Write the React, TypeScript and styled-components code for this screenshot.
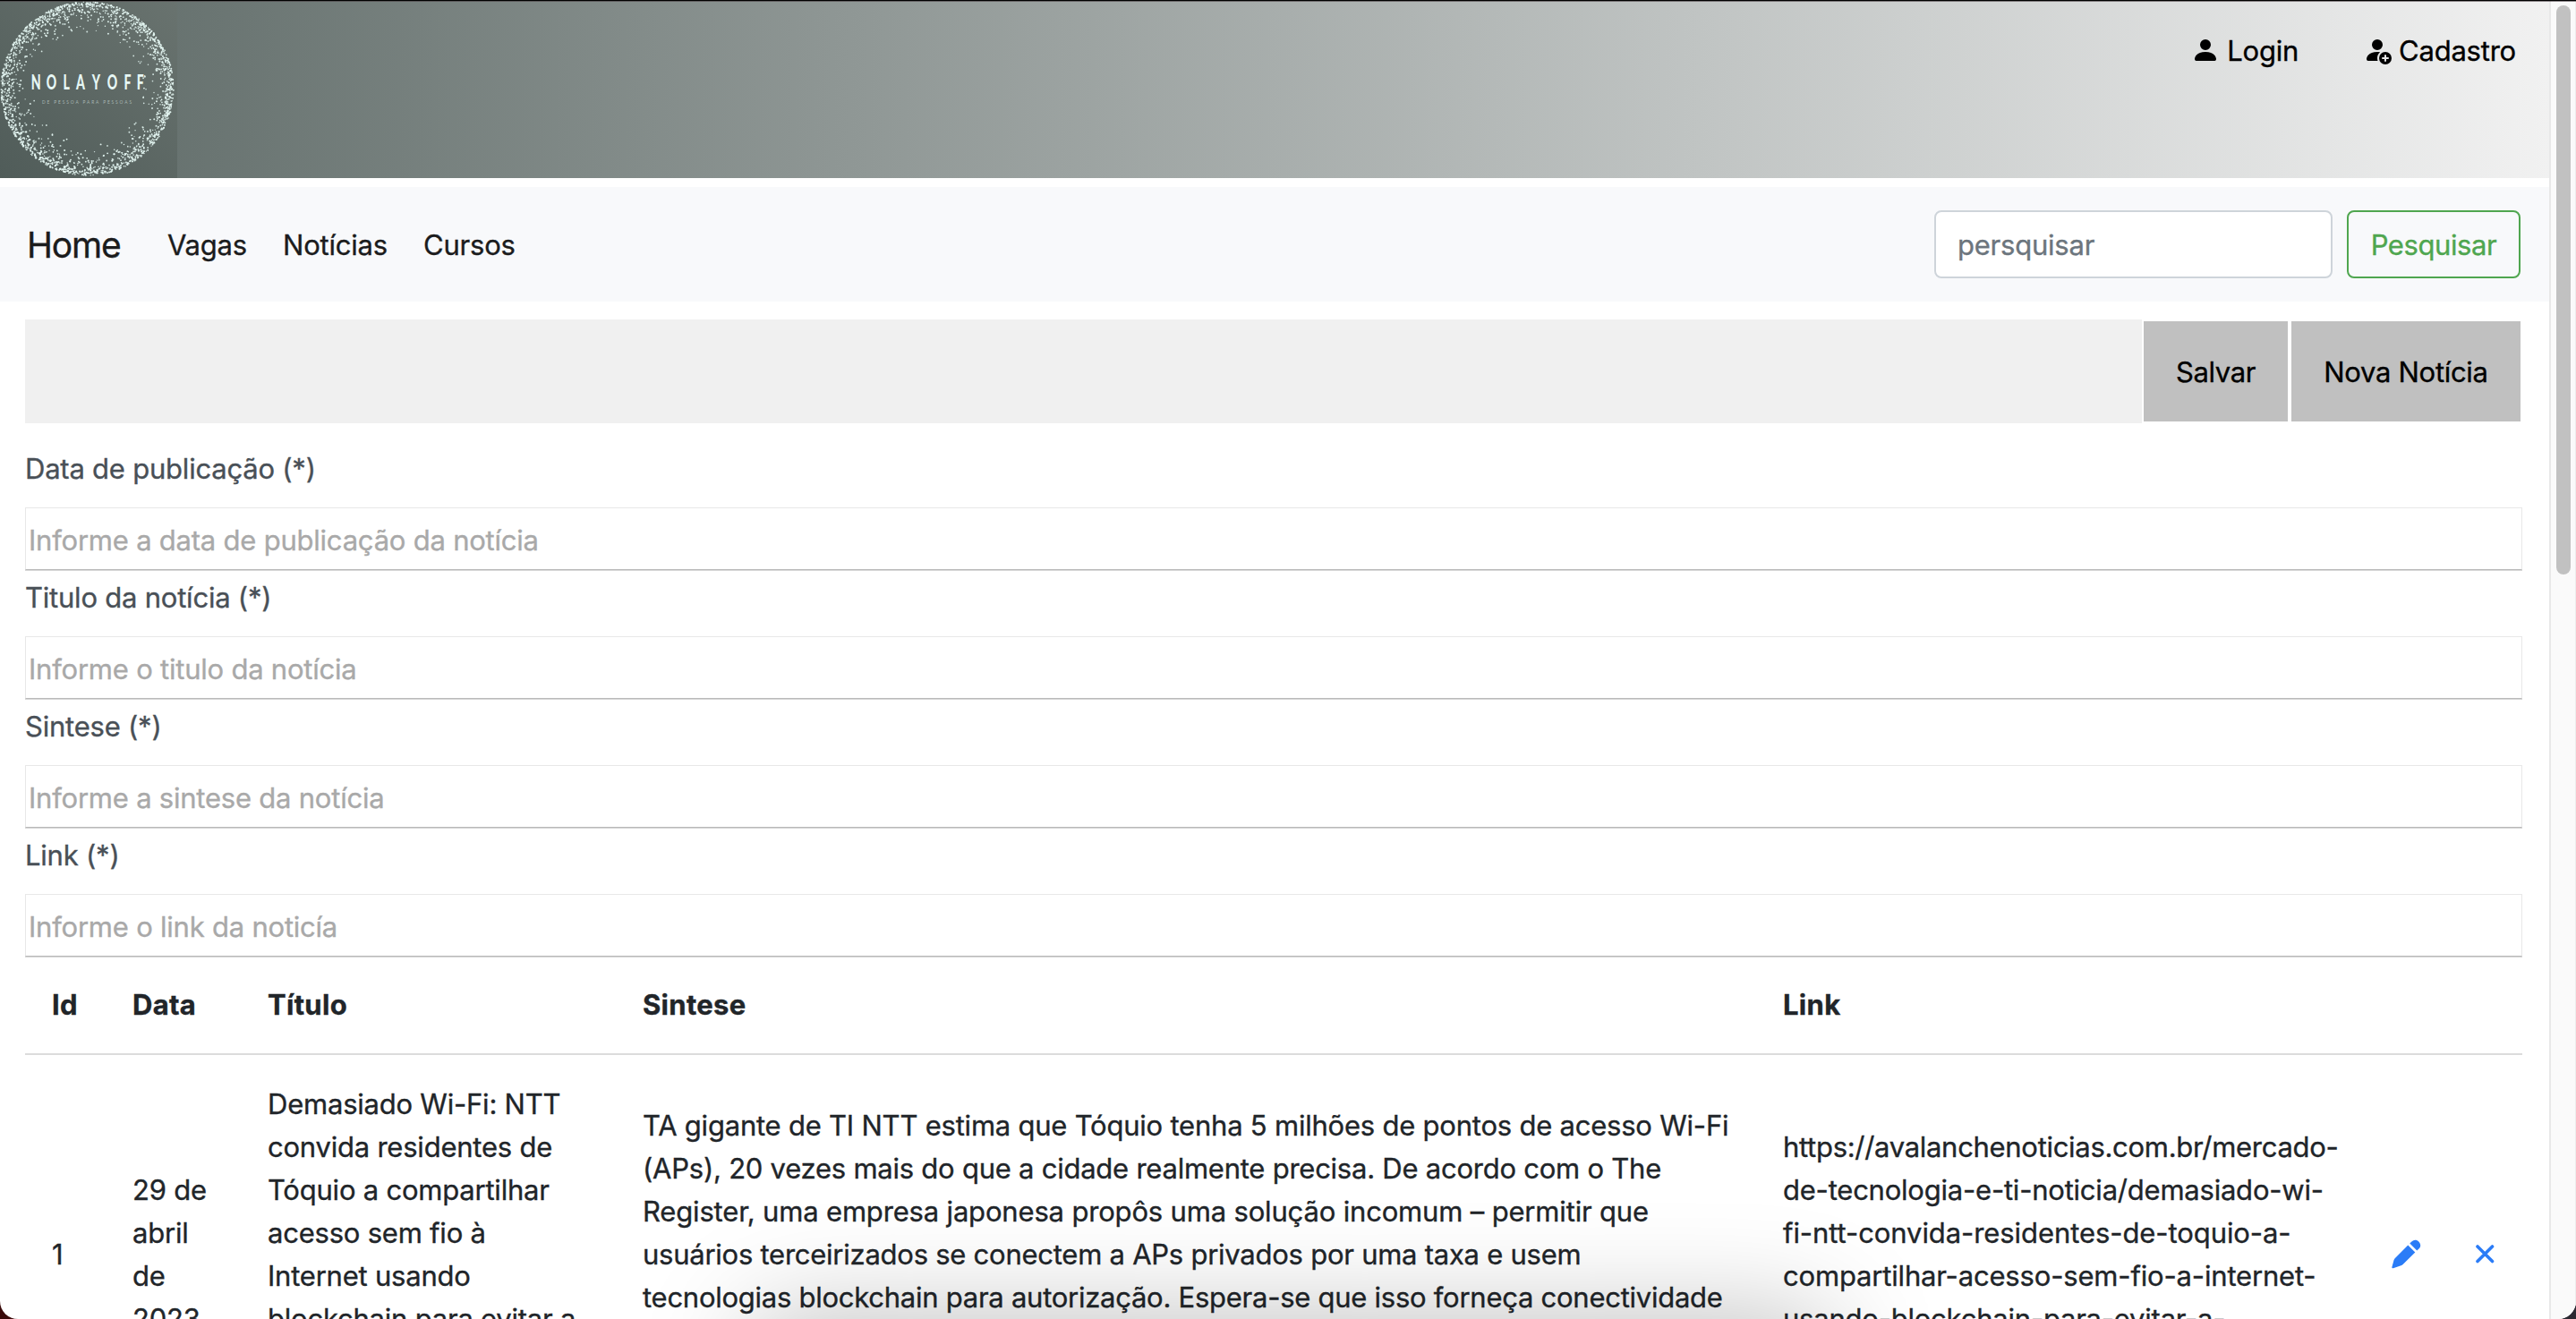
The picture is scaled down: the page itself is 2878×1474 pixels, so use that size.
import React from "react";
import styled, { createGlobalStyle } from "styled-components";

const Global = createGlobalStyle`
  * { box-sizing: border-box; }
  html, body { margin: 0; padding: 0; overflow: hidden; }
  body { background: linear-gradient(to right, #3a0a0a, #2c2932); }
`;

const Screen = styled.div`
  position: relative;
  display: flex;
  width: 2878px;
  height: 1474px;
  overflow: hidden;
  background: #fff;
  border-radius: 0 0 20px 20px;
  font-family: Inter, "Liberation Sans", sans-serif;
  font-size: 31px;
  font-weight: 400;
  line-height: 48px;
  color: #212529;
  -webkit-text-stroke: 0.35px currentColor;
`;
const Page = styled.div`
  width: 2848px;
  height: 1474px;
  overflow: hidden;
`;
const TopEdge = styled.div`
  position: absolute;
  left: 0;
  top: 0;
  width: 100%;
  height: 2px;
  background: linear-gradient(#000 50%, rgba(70, 60, 64, 0.6) 50%);
`;
const Fit = styled.span<{ $ls?: number }>`
  white-space: pre;
  letter-spacing: ${(p) => p.$ls ?? -0.22}px;
`;

const Header = styled.header`
  display: flex;
  justify-content: space-between;
  height: 199px;
  background: linear-gradient(to right, #5e6a67, #f1f1f1);
`;
const Logo = styled.svg`
  display: block;
  width: 198px;
  height: 199px;
  -webkit-text-stroke: 0;
`;
const Account = styled.nav`
  display: flex;
  padding: 33px 37px 0 0;
  gap: 72px;
  color: #000;
`;
const AccountLink = styled.a`
  display: flex;
  height: 48px;
  svg { margin-top: 7px; margin-right: 8px; flex: none; }
`;

const Navbar = styled.nav`
  display: flex;
  align-items: center;
  justify-content: space-between;
  height: 128px;
  margin-top: 10px;
  padding: 0 32px 0 30px;
  background: #f8f9fb;
`;
const Menu = styled.div`
  display: flex;
  align-items: center;
  padding-top: 1px;
  color: #1b1c1d;
`;
const Brand = styled.a`
  width: 157px;
  font-size: 39px;
`;
const MenuItem = styled.a<{ $w: number }>`
  width: ${(p) => p.$w}px;
`;
const Search = styled.form`
  display: flex;
  gap: 16px;
`;
const SearchField = styled.div`
  width: 445px;
  height: 76px;
  padding: 13px 24px 0;
  border: 2px solid #ced4da;
  border-radius: 8px;
  background: #fff;
  color: #6c757d;
`;
const SearchButton = styled.button`
  width: 194px;
  height: 76px;
  padding: 2px 0 0;
  border: 2px solid #4fa64f;
  border-radius: 8px;
  background: transparent;
  color: #4fa64f;
  font: inherit;
`;

const Content = styled.main`
  padding: 20px 30px 0 28px;
`;
const Toolbar = styled.div`
  display: flex;
  align-items: center;
  height: 116px;
  margin-right: 2px;
`;
const ToolbarFill = styled.div`
  flex: 1;
  height: 116px;
  margin-right: 2px;
  background: #f0f0f0;
`;
const ToolButton = styled.button<{ $w: number }>`
  width: ${(p) => p.$w}px;
  height: 112px;
  margin-left: 4px;
  padding: 2px 0 0;
  border: 0;
  background: #c0c0c0;
  color: #000;
  font: inherit;
  &:first-of-type { margin-left: 0; }
`;

const Form = styled.div`
  padding-top: 27px;
`;
const Field = styled.div`
  height: 144px;
`;
const Label = styled.label`
  display: block;
  height: 67px;
  color: #495057;
`;
const Input = styled.div`
  height: 70px;
  padding: 12px 0 0 3px;
  border: 1px solid #e8e8e8;
  border-bottom-color: #b9b9b9;
  box-shadow: 0 1px 0 #d6d6d6;
  color: #a9a9a9;
`;

const Row = styled.div`
  display: grid;
  grid-template-columns: 120px 151px 419px 1274px 680px 94px 82px;
`;
const HeadRow = styled(Row)`
  height: 103px;
  padding-top: 23px;
  border-bottom: 2px solid #dcdcdc;
  font-weight: 700;
  & > :first-child { padding-left: 30px; }
`;
const Cell = styled.div<{ $top: number }>`
  display: flex;
  flex-direction: column;
  padding-top: ${(p) => p.$top}px;
`;
const IdCell = styled(Cell)`
  padding-left: 30px;
`;
const IconButton = styled.div<{ $top: number }>`
  padding-top: ${(p) => p.$top}px;
  svg { display: block; }
`;

const Shadow = styled.div`
  position: absolute;
  left: 840px;
  top: 1474px;
  width: 1205px;
  height: 200px;
  border-radius: 30px;
  box-shadow: 0 -4px 120px 0 rgba(0, 0, 0, 0.25);
`;
const Scrollbar = styled.div`
  width: 30px;
  height: 1474px;
  padding: 6px 6px 0;
  border-left: 2px solid #e8e8e8;
  border-right: 1px solid #ededed;
  background: #fafafa;
`;
const Thumb = styled.div`
  width: 16px;
  height: 636px;
  border-radius: 8px;
  background: #c1c1c1;
`;

const makeDots = () => {
  let s = 7;
  const rnd = () => {
    s = (s * 16807) % 2147483647;
    return s / 2147483647;
  };
  const dots: { x: number; y: number; r: number; o: number }[] = [];
  for (let i = 0; i < 2000; i++) {
    const a = rnd() * Math.PI * 2;
    const depth = Math.min(30 + rnd() * 6, -Math.log(1 - rnd()) * 7.5);
    const d = 96.5 - depth;
    dots.push({
      x: 97.5 + Math.cos(a) * d,
      y: 99 + Math.sin(a) * (d + 0.5),
      r: 0.68 + rnd() * 0.37,
      o: 0.8 + rnd() * 0.2,
    });
  }
  return dots;
};
const dots = makeDots();

const LETTER_SQUEEZE = 0.6;
const letterCenters = [40.3, 57.5, 74.3, 90, 107.3, 125.5, 142.5, 156.7];

const LogoMark = () => (
  <Logo viewBox="0 0 198 199">
    <defs>
      <linearGradient id="logoBg" x1="0" y1="1" x2="1" y2="0">
        <stop offset="0" stopColor="#505c59" />
        <stop offset="1" stopColor="#69736f" />
      </linearGradient>
    </defs>
    <rect width="198" height="199" fill="url(#logoBg)" />
    {dots.map((d, i) => (
      <circle key={i} cx={d.x} cy={d.y} r={d.r} fill="#e4f6f2" opacity={d.o} />
    ))}
    <text
      transform={`translate(0 99.8) scale(${LETTER_SQUEEZE} 1)`}
      x={letterCenters.map((x) => (x / LETTER_SQUEEZE).toFixed(2)).join(" ")}
      textAnchor="middle"
      fontFamily="Lato, sans-serif"
      fontWeight="900"
      fontSize="23.5"
      fill="#e6f7f4"
    >
      NOLAYOFF
    </text>
    <text x="47" y="115.5" fontFamily="Lato, sans-serif" fontSize="4.8" fill="#a9b8b4" textLength="100" lengthAdjust="spacing">DE PESSOA PARA PESSOAS</text>
  </Logo>
);

const PersonIcon = () => (
  <svg width="32" height="32" viewBox="0 0 16 16" fill="#000">
    <path d="M3 14s-1 0-1-1 1-4 6-4 6 3 6 4-1 1-1 1H3Zm5-6a3 3 0 1 0 0-6 3 3 0 0 0 0 6Z" />
  </svg>
);
const PersonAddIcon = () => (
  <svg width="32" height="32" viewBox="0 0 16 16" fill="#000">
    <path d="M12.5 16a3.5 3.5 0 1 0 0-7 3.5 3.5 0 0 0 0 7Zm.5-5v1h1a.5.5 0 0 1 0 1h-1v1a.5.5 0 0 1-1 0v-1h-1a.5.5 0 0 1 0-1h1v-1a.5.5 0 0 1 1 0Zm-2-6a3 3 0 1 1-6 0 3 3 0 0 1 6 0Z" />
    <path d="M2 13c0 1 1 1 1 1h5.256A4.493 4.493 0 0 1 8 12.5a4.49 4.49 0 0 1 1.544-3.393C9.077 9.038 8.564 9 8 9c-5 0-6 3-6 4Z" />
  </svg>
);
const PencilIcon = () => (
  <svg width="33" height="33" viewBox="0 0 33 33" fill="#2b7cf7">
    <path d="M18.3 6.5 L26.3 14.5 L12.6 28 Q11.7 28.9 10.5 29.3 L1.8 32.3 Q.2 32.6 .3 31.2 L2.5 23.2 Q2.9 21.9 3.9 20.9z" />
    <path d="M20.3 4.6 L22.7 2.2 Q24.7 .2 27.3 .8 Q31.3 2.1 32.2 6.3 Q32.5 8.3 31 9.9 L28.3 12.6z" />
  </svg>
);
const CloseIcon = () => (
  <svg width="22" height="22" viewBox="0 0 22 22" fill="none" stroke="#2b7cf7" strokeWidth="3.6" strokeLinecap="round">
    <path d="M2 2 L18.5 18.5 M18.5 2 L2 18.5" />
  </svg>
);

type Line = [string, number?];

const fields: { label: string; hint: string }[] = [
  { label: "Data de publicação (*)", hint: "Informe a data de publicação da notícia" },
  { label: "Titulo da notícia (*)", hint: "Informe o titulo da notícia" },
  { label: "Sintese (*)", hint: "Informe a sintese da notícia" },
  { label: "Link (*)", hint: "Informe o link da noticía" },
];
const headings = ["Id", "Data", "Título", "Sintese", "Link"];
const dateLines: Line[] = [["29 de"], ["abril"], ["de"], ["2023"]];
const titleLines: Line[] = [
  ["Demasiado Wi-Fi: NTT"],
  ["convida residentes de"],
  ["Tóquio a compartilhar"],
  ["acesso sem fio à"],
  ["Internet usando"],
  ["blockchain para evitar a"],
];
const summaryLines: Line[] = [
  ["TA gigante de TI NTT estima que Tóquio tenha 5 milhões de pontos de acesso Wi-Fi"],
  ["(APs), 20 vezes mais do que a cidade realmente precisa. De acordo com o The", -0.24],
  ["Register, uma empresa japonesa propôs uma solução incomum – permitir que", -0.17],
  ["usuários terceirizados se conectem a APs privados por uma taxa e usem", -0.25],
  ["tecnologias blockchain para autorização. Espera-se que isso forneça conectividade", -0.26],
];
const linkLines: Line[] = [
  ["https://avalanchenoticias.com.br/mercado-", -0.3],
  ["de-tecnologia-e-ti-noticia/demasiado-wi-"],
  ["fi-ntt-convida-residentes-de-toquio-a-", -0.08],
  ["compartilhar-acesso-sem-fio-a-internet-", -0.17],
  ["usando-blockchain-para-evitar-a-"],
];

const Lines = ({ lines }: { lines: Line[] }) => (
  <>
    {lines.map(([text, ls]) => (
      <Fit key={text} $ls={ls}>{text}</Fit>
    ))}
  </>
);

export default function App() {
  return (
    <>
      <Global />
      <Screen>
        <Page>
          <Header>
            <LogoMark />
            <Account>
              <AccountLink><PersonIcon /><Fit>Login</Fit></AccountLink>
              <AccountLink><PersonAddIcon /><Fit>Cadastro</Fit></AccountLink>
            </Account>
          </Header>
          <Navbar>
            <Menu>
              <Brand><Fit $ls={-1.2}>Home</Fit></Brand>
              <MenuItem $w={129}><Fit>Vagas</Fit></MenuItem>
              <MenuItem $w={157}><Fit>Notícias</Fit></MenuItem>
              <MenuItem $w={110}><Fit>Cursos</Fit></MenuItem>
            </Menu>
            <Search>
              <SearchField><Fit>persquisar</Fit></SearchField>
              <SearchButton type="button"><Fit $ls={-0.4}>Pesquisar</Fit></SearchButton>
            </Search>
          </Navbar>
          <Content>
            <Toolbar>
              <ToolbarFill />
              <ToolButton $w={161}><Fit $ls={-0.4}>Salvar</Fit></ToolButton>
              <ToolButton $w={256}><Fit $ls={-0.3}>Nova Notícia</Fit></ToolButton>
            </Toolbar>
            <Form>
              {fields.map((f) => (
                <Field key={f.label}>
                  <Label><Fit>{f.label}</Fit></Label>
                  <Input><Fit>{f.hint}</Fit></Input>
                </Field>
              ))}
            </Form>
            <HeadRow>
              {headings.map((h) => (
                <div key={h}><Fit $ls={0.3}>{h}</Fit></div>
              ))}
            </HeadRow>
            <Row>
              <IdCell $top={199}><Fit>1</Fit></IdCell>
              <Cell $top={127}><Lines lines={dateLines} /></Cell>
              <Cell $top={31}><Lines lines={titleLines} /></Cell>
              <Cell $top={55}><Lines lines={summaryLines} /></Cell>
              <Cell $top={79}><Lines lines={linkLines} /></Cell>
              <IconButton $top={206}><PencilIcon /></IconButton>
              <IconButton $top={212}><CloseIcon /></IconButton>
            </Row>
          </Content>
        </Page>
        <Scrollbar><Thumb /></Scrollbar>
        <Shadow />
        <TopEdge />
      </Screen>
    </>
  );
}
